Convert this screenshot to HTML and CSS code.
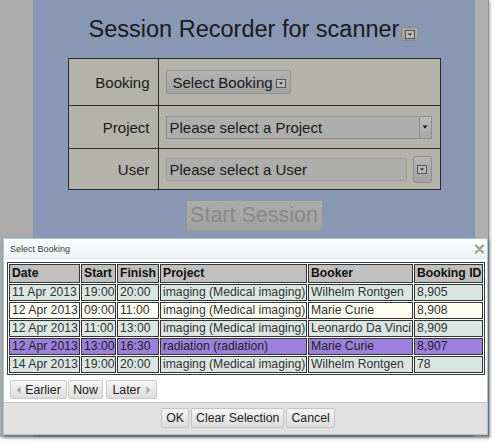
FILE: index.html
```html
<!DOCTYPE html>
<html>
<head>
<meta charset="utf-8">
<link rel="stylesheet" href="styles.css">
</head>
<body>
<div class="screen">
  <div class="lstrip"></div>
  <div class="panel">
    <h1 class="title">Session Recorder for scanner<span class="tbtn"><svg class="ibox" width="10" height="9" viewBox="0 0 10 9"><rect x="0.5" y="0.5" width="9" height="8" fill="#b9b9b9" stroke="#555"/><path d="M3 3.5h4l-2 2z" fill="#111"/></svg></span></h1>
    <div class="form">
      <div class="lbl r1">Booking</div>
      <div class="fld r1"><div class="sbtn">Select Booking<svg class="ibox" width="10" height="9" viewBox="0 0 10 9"><rect x="0.5" y="0.5" width="9" height="8" fill="#b9b9b9" stroke="#555"/><path d="M3 3.5h4l-2 2z" fill="#111"/></svg></div></div>
      <div class="lbl r2 bt">Project</div>
      <div class="fld r2 bt"><div class="sel"><span>Please select a Project</span><span class="arrow"><svg width="6" height="4" viewBox="0 0 6 4"><path d="M0.5 0.5h5l-2.5 3z" fill="#111"/></svg></span></div></div>
      <div class="lbl r3 bt">User</div>
      <div class="fld r3 bt"><div class="inp">Please select a User</div><div class="ubtn"><svg class="ibox" width="10" height="9" viewBox="0 0 10 9"><rect x="0.5" y="0.5" width="9" height="8" fill="#b9b9b9" stroke="#555"/><path d="M3 3.5h4l-2 2z" fill="#111"/></svg></div></div>
    </div>
    <div class="start">Start Session</div>
  </div>
  <div class="rstrip"></div>

  <div class="dialog">
    <div class="dtitle"><span>Select Booking</span><svg class="close" width="11" height="10" viewBox="0 0 11 10"><path d="M2 1.5l7 7M9 1.5l-7 7" stroke="#a39e88" stroke-width="2.4" stroke-linecap="round"/></svg></div>
    <div class="dcontent">
      <table class="bk">
        <thead>
          <tr><th class="c1">Date</th><th class="c2">Start</th><th class="c3">Finish</th><th class="c4">Project</th><th class="c5">Booker</th><th class="c6">Booking ID</th></tr>
        </thead>
        <tbody>
          <tr class="alt"><td>11 Apr 2013</td><td>19:00</td><td>20:00</td><td>imaging (Medical imaging)</td><td>Wilhelm Rontgen</td><td>8,905</td></tr>
          <tr class="ivory"><td>12 Apr 2013</td><td>09:00</td><td>11:00</td><td>imaging (Medical imaging)</td><td>Marie Curie</td><td>8,908</td></tr>
          <tr class="alt"><td>12 Apr 2013</td><td>11:00</td><td>13:00</td><td>imaging (Medical imaging)</td><td>Leonardo Da Vinci</td><td>8,909</td></tr>
          <tr class="selrow"><td>12 Apr 2013</td><td>13:00</td><td>16:30</td><td>radiation (radiation)</td><td>Marie Curie</td><td>8,907</td></tr>
          <tr class="alt"><td>14 Apr 2013</td><td>19:00</td><td>20:00</td><td>imaging (Medical imaging)</td><td>Wilhelm Rontgen</td><td>78</td></tr>
        </tbody>
      </table>
      <div class="nav">
        <div class="btn earlier"><svg class="tri" width="5" height="8" viewBox="0 0 5 8"><path d="M4.5 0.5v7l-4-3.5z" fill="#98a7bb"/></svg>Earlier</div>
        <div class="btn now">Now</div>
        <div class="btn later">Later<svg class="tri" width="5" height="8" viewBox="0 0 5 8"><path d="M0.5 0.5v7l4-3.5z" fill="#98a7bb"/></svg></div>
      </div>
    </div>
    <div class="dpane">
      <div class="btn pb">OK</div>
      <div class="btn pb">Clear Selection</div>
      <div class="btn pb">Cancel</div>
    </div>
  </div>
</div>
</body>
</html>
```
FILE: styles.css
```css
* { box-sizing: border-box; }
html, body { margin: 0; padding: 0; }
body {
  background: #ffffff;
  font-family: "Liberation Sans", Arial, sans-serif;
  width: 496px;
  height: 445px;
  overflow: hidden;
}
.screen {
  position: relative;
  width: 489px;
  height: 437px;
  display: flex;
  background: #ababab;
  box-shadow: 1px 1px 3px rgba(0,0,0,0.35);
}
.lstrip { width: 33px; background: #ababab; }
.rstrip { flex: 1; background: #b0b0b0; border-right: 1px solid #8e8e8e; }
.panel {
  width: 442px;
  background: #8797b4;
  display: flex;
  flex-direction: column;
  align-items: center;
}
.title {
  margin: 16px 0 0;
  font-size: 23.5px;
  font-weight: normal;
  line-height: 27px;
  color: #1a1a1a;
  display: flex;
  white-space: nowrap;
}
.tbtn {
  align-self: flex-end;
  margin: 0 0 2px 2px;
  width: 18px;
  height: 14px;
  background: linear-gradient(#ababab, #9b9b9b);
  border: 1px solid #8c8c8c;
  border-radius: 2px;
  display: flex;
  align-items: center;
  justify-content: center;
}
.ibox { display: block; flex-shrink: 0; }
.form {
  margin-top: 15px;
  display: grid;
  grid-template-columns: 90px 282px;
  grid-template-rows: 46px 43px 42px;
  border: 1px solid #2b2b2b;
  background: #b3b3a9;
  width: 373px;
  height: 132px;
  font-size: 15px;
  color: #1a1a1a;
  white-space: nowrap;
}
.bt { border-top: 1px solid #2b2b2b; }
.lbl {
  border-right: 1px solid #2b2b2b;
  display: flex;
  align-items: center;
  justify-content: flex-end;
  padding-right: 8px;
}
.fld {
  display: flex;
  align-items: center;
  padding-left: 7px;
}
.sbtn {
  display: flex;
  align-items: center;
  height: 24px;
  padding: 0 4px 0 6px;
  background: linear-gradient(#b3b3b3, #a1a1a1);
  border: 1px solid #939393;
  border-radius: 2px;
}
.sbtn .ibox { margin-left: 3px; margin-top: 2px; }
.sel {
  width: 266px;
  height: 23px;
  border: 1px solid #8e8e8e;
  background: #adadab;
  display: flex;
  align-items: center;
  padding-left: 3px;
}
.sel .arrow {
  margin-left: auto;
  width: 12px;
  height: 100%;
  border-left: 1px solid #8e8e8e;
  background: linear-gradient(#bcbcbc, #a7a7a7);
  display: flex;
  align-items: center;
  justify-content: center;
}
.inp {
  width: 241px;
  height: 23px;
  border: 1px solid #9b9b9b;
  border-radius: 2px;
  background: #adadab;
  display: flex;
  align-items: center;
  padding-left: 3px;
}
.ubtn {
  margin-left: 6px;
  width: 19px;
  height: 27px;
  border: 1px solid #8d8d8d;
  border-radius: 3px;
  background: linear-gradient(#b6b6b6, #a2a2a2);
  display: flex;
  align-items: center;
  justify-content: center;
}
.start {
  margin-top: 10px;
  width: 137px;
  height: 31px;
  border: 1px solid #979797;
  border-radius: 2px;
  background: linear-gradient(#acacac, #a1a1a1);
  color: #888888;
  font-size: 21.5px;
  display: flex;
  align-items: center;
  justify-content: center;
}

/* dialog */
.dialog {
  position: absolute;
  left: 3px;
  top: 238px;
  width: 485px;
  height: 197px;
  background: #ffffff;
  border: 1px solid #a9c6de;
  box-shadow: 1px 2px 3px rgba(0,0,0,0.35);
  display: flex;
  flex-direction: column;
}
.dtitle {
  height: 20px;
  border-bottom: 1px solid #dde7ef;
  background: linear-gradient(#fdfeff, #eef3f8);
  display: flex;
  align-items: center;
  justify-content: space-between;
  padding: 0 2px 0 6px;
  font-size: 9px;
  color: #3a3a3a;
}
.close { display: block; margin-top: 1px; }
.dcontent {
  flex: 1;
  padding: 3px 3px 0;
}
.bk {
  border-collapse: separate;
  border-spacing: 1px;
  border: 1px solid #3a3a3a;
  table-layout: fixed;
  width: 478px;
  font-size: 12.2px;
}
.bk th, .bk td {
  border: 1px solid #333333;
  padding: 0 0 0 2px;
  text-align: left;
  white-space: nowrap;
}
.bk th {
  background: #c0c0c0;
  line-height: 17px;
  font-weight: bold;
  color: #111111;
}
.bk td {
  line-height: 15px;
  color: #333333;
}
.c1 { width: 71px; }
.c2 { width: 35px; }
.c3 { width: 42px; }
.c4 { width: 147px; }
.c5 { width: 105px; }
.c6 { width: 69px; }
.alt td { background: #dae6e2; }
.ivory td { background: #fffff2; }
.selrow td { background: #9d80dd; color: #222222; }
.nav {
  display: flex;
  margin: 5px 0 0 3px;
}
.btn {
  height: 19px;
  background: linear-gradient(#f7f7f7, #dddddd);
  border: 1px solid #cbcbcb;
  border-radius: 2px;
  font-size: 12.3px;
  color: #222222;
  display: flex;
  align-items: center;
  justify-content: center;
  white-space: nowrap;
}
.earlier { width: 57px; margin-right: 1px; }
.earlier .tri { margin-right: 4px; }
.now { width: 35px; margin-right: 3px; }
.later { width: 51px; }
.later .tri { margin-left: 5px; }
.dpane {
  height: 32px;
  border-top: 1px solid #c9c9c9;
  background: #e1e1e1;
  display: flex;
  justify-content: center;
  gap: 2px;
  padding: 5px 0 0 5px;
}
.pb {
  height: 20px;
  padding: 0 4px;
  background: linear-gradient(#f5f5f5, #dcdcdc);
  border-color: #c4c4c4;
}
```
